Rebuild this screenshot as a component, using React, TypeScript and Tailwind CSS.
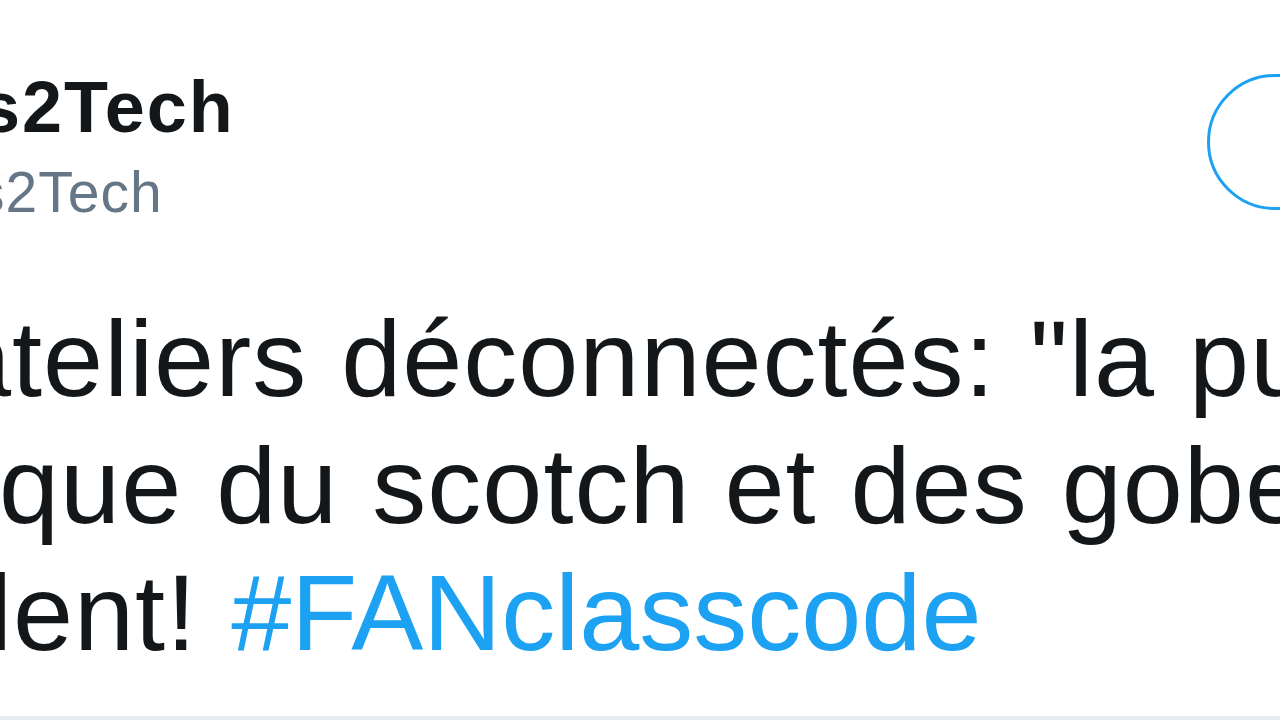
import React from 'react';

const App: React.FC = () => {
  return (
    <div
      className="w-[1280px] h-[720px] overflow-hidden bg-white flex flex-col"
      style={{ fontFamily: '"Liberation Sans", Arial, sans-serif' }}
    >
      {/* Header: name, handle, follow button */}
      <div className="flex items-start justify-between pt-[67px]">
        <div className="flex flex-col">
          <div className="whitespace-nowrap text-[72px] leading-[80px] font-bold tracking-[2px] text-[#14171a] -ml-[20px]">
            s2Tech
          </div>
          <div className="whitespace-nowrap text-[57px] leading-[64px] tracking-[1px] text-[#657786] -ml-[24px] mt-[13px]">
            s2Tech
          </div>
        </div>
        <button className="mt-[7px] w-[300px] h-[136px] shrink-0 -mr-[227px] rounded-full border-[3px] border-[#1da1f2] bg-white" />
      </div>

      {/* Tweet text */}
      <div className="mt-[71px] flex flex-col text-[108px] leading-[127px] tracking-[1px] [word-spacing:3px] text-[#14171a] whitespace-nowrap">
        <div className="-ml-[49px]">ateliers déconnectés: "la pu</div>
        <div className="-ml-[1px]">que du scotch et des gobe</div>
        <div className="-ml-[12px]">
          lent! <span className="text-[#1da1f2] tracking-[0px]">#FANclasscode</span>
        </div>
      </div>

      <div className="mt-auto h-[4px] bg-[#e6ecf0]" />
    </div>
  );
};

export default App;
